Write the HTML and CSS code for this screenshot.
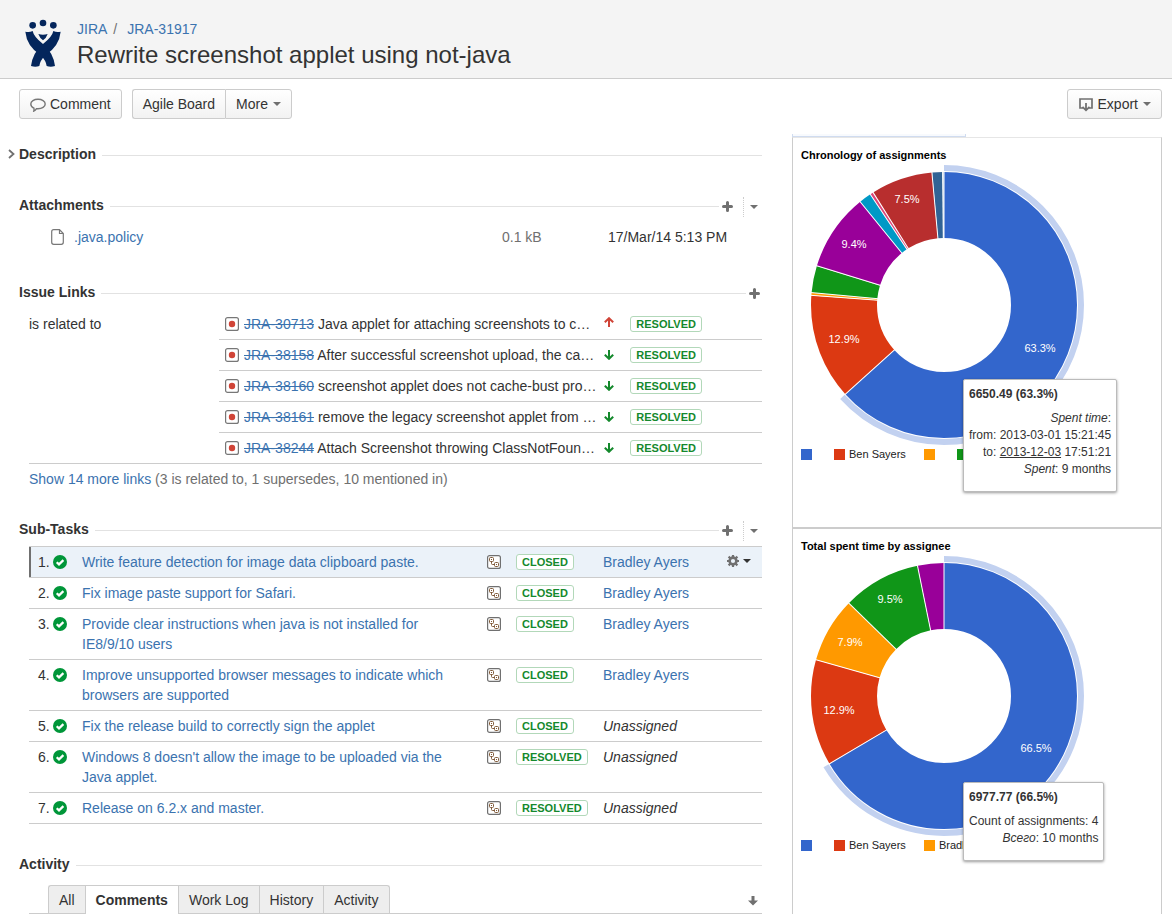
FILE: index.html
```html
<!DOCTYPE html>
<html lang="en">
<head>
<meta charset="utf-8">
<title>JRA-31917 Rewrite screenshot applet using not-java</title>
<link rel="stylesheet" href="styles.css">
</head>
<body>
<svg class="defs" aria-hidden="true">
  <symbol id="plus" viewBox="0 0 11 11"><path d="M5.500 1.500v8M1.500 5.500h8" fill="none" stroke="#707070" stroke-width="3" stroke-linecap="round"/></symbol>
  <symbol id="caret" viewBox="0 0 8 4"><path d="M0 0h8L4 4z" fill="currentColor"/></symbol>
  <symbol id="bug" viewBox="0 0 14 14"><rect x=".6" y=".6" width="12.800" height="12.800" rx="2" fill="#fff" stroke="#777" stroke-width="1.200"/><circle cx="7" cy="7" r="3.200" fill="#d04437"/></symbol>
  <symbol id="up" viewBox="0 0 10 10"><path d="M5 10V1.500M.8 5.300L5 1.200l4.200 4.100" fill="none" stroke="#d04437" stroke-width="2"/></symbol>
  <symbol id="down" viewBox="0 0 10 10"><path d="M5 0v8.500M.8 4.700L5 8.800l4.200-4.100" fill="none" stroke="#14892c" stroke-width="2"/></symbol>
  <symbol id="done" viewBox="0 0 14 14"><circle cx="7" cy="7" r="7" fill="#009639"/><path d="M3.700 7.200l2.300 2.200 4.400-4.300" fill="none" stroke="#fff" stroke-width="2.200"/></symbol>
  <symbol id="subtask" viewBox="0 0 14 14"><rect x=".6" y=".6" width="12.800" height="12.800" rx="2" fill="#fff" stroke="#707070" stroke-width="1.200"/><g fill="none" stroke="#815b3a"><rect x="2.500" y="2.500" width="4" height="4" rx="1"/><rect x="7.500" y="7.500" width="4" height="4" rx="1"/><path d="M4.500 6.500v2q0 1 1 1h2"/></g><path d="M4 4h1v1H4zM9 9h1v1H9z" fill="#815b3a"/></symbol>
</svg>

<header class="page-header">
  <svg class="logo" viewBox="75 57 108 144" role="img" aria-label="JIRA">
    <g fill="#04265c">
      <circle cx="98" cy="76" r="10"/><circle cx="129" cy="69" r="10"/><circle cx="160" cy="76" r="10"/>
      <path d="M115 102Q129 106 143 102Q138 116 129 121Q120 116 115 102Z"/>
      <path d="M76 95Q88 98 98 93Q101 110 129 132Q160 158 165 198Q152 203 140 198Q138 182 122 166Q80 138 76 95Z"/>
      <path d="M182 95Q170 98 160 93Q157 110 129 132Q98 158 93 198Q106 203 118 198Q120 182 136 166Q178 138 182 95Z"/>
    </g>
  </svg>
  <div>
    <nav class="crumbs" aria-label="Breadcrumb"><a href="#">JIRA</a><span class="slash">/</span><a href="#">JRA-31917</a></nav>
    <h1>Rewrite screenshot applet using not-java</h1>
  </div>
</header>

<div class="toolbar">
  <button class="btn" type="button">
    <svg width="16" height="16" viewBox="0 0 16 16"><path d="M8 3.200c4 0 7.200 2 7.200 4.800S12 12.800 8 12.800q-.8 0-1.500-.1Q5.300 14.700 3.800 15.200q.4-1.500.1-3.100C2 11.300.8 9.700.8 8 .8 5.200 4 3.200 8 3.200z" fill="none" stroke="#777" stroke-width="1.400"/></svg>Comment</button>
  <div class="btn-group">
    <button class="btn" type="button">Agile Board</button>
    <button class="btn" type="button">More<svg class="caret" width="8" height="4"><use href="#caret"/></svg></button>
  </div>
  <button class="btn btn-export" type="button">
    <svg width="16" height="16" viewBox="0 0 16 16"><path d="M5 12H2V3h12v9h-3" fill="none" stroke="#707070" stroke-width="1.700"/><path d="M8 7v7M4.500 10.800L8 14.300l3.500-3.500" fill="none" stroke="#707070" stroke-width="1.800"/></svg>Export<svg class="caret" width="8" height="4"><use href="#caret"/></svg></button>
</div>

<div class="content">
  <main class="issue">
    <section class="description">
      <div class="heading"><button class="twisty" type="button" aria-label="Expand description"><svg width="7" height="10" viewBox="0 0 7 10"><path d="M1 1l4.500 4L1 9" fill="none" stroke="#707070" stroke-width="1.800"/></svg></button><h2>Description</h2><span class="rule"></span></div>
    </section>

    <section class="attachments">
      <div class="heading"><h2>Attachments</h2><span class="rule"></span>
        <button class="op" type="button" aria-label="Add attachment"><svg width="11" height="11"><use href="#plus"/></svg></button>
        <button class="op op-menu" type="button" aria-label="Attachment options"><svg width="8" height="4"><use href="#caret"/></svg></button>
      </div>
      <div class="file">
        <svg width="13" height="16" viewBox="0 0 13 16"><path d="M8.500.7H2.700q-2 0-2 2v10.600q0 2 2 2h7.600q2 0 2-2V4.500zM8.500.7v3.800h3.800" fill="none" stroke="#777" stroke-width="1.200"/></svg>
        <a href="#">.java.policy</a><span class="size">0.1 kB</span><span>17/Mar/14 5:13 PM</span>
      </div>
    </section>

    <section class="links">
      <div class="heading"><h2>Issue Links</h2><span class="rule"></span>
        <button class="op" type="button" aria-label="Add link"><svg width="11" height="11"><use href="#plus"/></svg></button>
      </div>
      <dl class="link-list">
        <dt>is related to</dt>
        <dd>
          <div class="link-row"><svg width="14" height="14"><use href="#bug"/></svg><p><a href="#">JRA-30713</a> Java applet for attaching screenshots to c…</p><svg class="priority" width="10" height="10"><use href="#up"/></svg><span class="badge">RESOLVED</span></div>
          <div class="link-row"><svg width="14" height="14"><use href="#bug"/></svg><p><a href="#">JRA-38158</a> After successful screenshot upload, the ca…</p><svg width="10" height="10"><use href="#down"/></svg><span class="badge">RESOLVED</span></div>
          <div class="link-row"><svg width="14" height="14"><use href="#bug"/></svg><p><a href="#">JRA-38160</a> screenshot applet does not cache-bust pro…</p><svg width="10" height="10"><use href="#down"/></svg><span class="badge">RESOLVED</span></div>
          <div class="link-row"><svg width="14" height="14"><use href="#bug"/></svg><p><a href="#">JRA-38161</a> remove the legacy screenshot applet from …</p><svg width="10" height="10"><use href="#down"/></svg><span class="badge">RESOLVED</span></div>
          <div class="link-row"><svg width="14" height="14"><use href="#bug"/></svg><p><a href="#">JRA-38244</a> Attach Screenshot throwing ClassNotFoun…</p><svg width="10" height="10"><use href="#down"/></svg><span class="badge">RESOLVED</span></div>
        </dd>
      </dl>
      <p class="more-links"><a href="#">Show 14 more links</a> (3 is related to, 1 supersedes, 10 mentioned in)</p>
    </section>

    <section class="subtasks">
      <div class="heading"><h2>Sub-Tasks</h2><span class="rule"></span>
        <button class="op" type="button" aria-label="Create sub-task"><svg width="11" height="11"><use href="#plus"/></svg></button>
        <button class="op op-menu" type="button" aria-label="Sub-task options"><svg width="8" height="4"><use href="#caret"/></svg></button>
      </div>
      <table class="tasks">
        <colgroup><col class="c-num"><col><col class="c-type"><col class="c-status"><col class="c-who"><col class="c-ops"></colgroup>
        <tbody>
          <tr class="active"><td class="num">1.<svg width="14" height="14"><use href="#done"/></svg></td><td class="summary"><a href="#">Write feature detection for image data clipboard paste.</a></td><td><svg width="14" height="14"><use href="#subtask"/></svg></td><td><span class="badge">CLOSED</span></td><td><a href="#">Bradley Ayers</a></td><td><button class="gear" type="button" aria-label="Actions"><svg width="12" height="12" viewBox="0 0 12 12"><circle cx="6" cy="6" r="3.400" fill="none" stroke="#707070" stroke-width="2.600"/><path d="M6 0v2.500M6 9.500V12M0 6h2.500M9.500 6H12M1.600 1.600l1.900 1.900M8.500 8.500l1.900 1.900M10.400 1.600L8.500 3.500M3.500 8.500l-1.900 1.900" stroke="#707070" stroke-width="2.200"/></svg><svg width="8" height="4"><use href="#caret"/></svg></button></td></tr>
          <tr><td class="num">2.<svg width="14" height="14"><use href="#done"/></svg></td><td class="summary"><a href="#">Fix image paste support for Safari.</a></td><td><svg width="14" height="14"><use href="#subtask"/></svg></td><td><span class="badge">CLOSED</span></td><td><a href="#">Bradley Ayers</a></td><td></td></tr>
          <tr><td class="num">3.<svg width="14" height="14"><use href="#done"/></svg></td><td class="summary"><a href="#">Provide clear instructions when java is not installed for IE8/9/10 users</a></td><td><svg width="14" height="14"><use href="#subtask"/></svg></td><td><span class="badge">CLOSED</span></td><td><a href="#">Bradley Ayers</a></td><td></td></tr>
          <tr><td class="num">4.<svg width="14" height="14"><use href="#done"/></svg></td><td class="summary"><a href="#">Improve unsupported browser messages to indicate which browsers are supported</a></td><td><svg width="14" height="14"><use href="#subtask"/></svg></td><td><span class="badge">CLOSED</span></td><td><a href="#">Bradley Ayers</a></td><td></td></tr>
          <tr><td class="num">5.<svg width="14" height="14"><use href="#done"/></svg></td><td class="summary"><a href="#">Fix the release build to correctly sign the applet</a></td><td><svg width="14" height="14"><use href="#subtask"/></svg></td><td><span class="badge">CLOSED</span></td><td><em>Unassigned</em></td><td></td></tr>
          <tr><td class="num">6.<svg width="14" height="14"><use href="#done"/></svg></td><td class="summary"><a href="#">Windows 8 doesn't allow the image to be uploaded via the Java applet.</a></td><td><svg width="14" height="14"><use href="#subtask"/></svg></td><td><span class="badge">RESOLVED</span></td><td><em>Unassigned</em></td><td></td></tr>
          <tr><td class="num">7.<svg width="14" height="14"><use href="#done"/></svg></td><td class="summary"><a href="#">Release on 6.2.x and master.</a></td><td><svg width="14" height="14"><use href="#subtask"/></svg></td><td><span class="badge">RESOLVED</span></td><td><em>Unassigned</em></td><td></td></tr>
        </tbody>
      </table>
    </section>

    <section class="activity">
      <div class="heading"><h2>Activity</h2><span class="rule"></span></div>
      <div class="tabs">
        <a href="#">All</a><a href="#" class="current" aria-current="page">Comments</a><a href="#">Work Log</a><a href="#">History</a><a href="#">Activity</a>
        <button class="sort" type="button" aria-label="Sort order"><svg width="10" height="10" viewBox="0 0 10 10"><path d="M3.500 0h3v4.500H10L5 9.500 0 4.500h3.500z" fill="#707070"/></svg></button>
      </div>
    </section>
  </main>

  <aside class="charts">
    <div class="strip"></div>
    <section class="panel panel-first">
      <h2>Chronology of assignments</h2>
      <svg class="donut" width="280" height="280" viewBox="0 0 280 280" role="img" aria-label="Chronology of assignments">
        <g transform="rotate(-90 140 140)">
          <circle class="halo" cx="140" cy="140" r="137" pathLength="100" stroke-dasharray="63.3 100"/>
          <g class="ring">
            <circle cx="140" cy="140" r="100" pathLength="100" stroke="#3366cc" stroke-dasharray="63.3 100"/>
            <circle cx="140" cy="140" r="100" pathLength="100" stroke="#dc3912" stroke-dasharray="12.85 100" stroke-dashoffset="-63.3"/>
            <circle cx="140" cy="140" r="100" pathLength="100" stroke="#ff9900" stroke-dasharray=".35 100" stroke-dashoffset="-76.15"/>
            <circle cx="140" cy="140" r="100" pathLength="100" stroke="#109618" stroke-dasharray="3.25 100" stroke-dashoffset="-76.5"/>
            <circle cx="140" cy="140" r="100" pathLength="100" stroke="#990099" stroke-dasharray="9.4 100" stroke-dashoffset="-79.75"/>
            <circle cx="140" cy="140" r="100" pathLength="100" stroke="#0099c6" stroke-dasharray="1.5 100" stroke-dashoffset="-89.15"/>
            <circle cx="140" cy="140" r="100" pathLength="100" stroke="#dd4477" stroke-dasharray=".4 100" stroke-dashoffset="-90.65"/>
            <circle cx="140" cy="140" r="100" pathLength="100" stroke="#b82e2e" stroke-dasharray="7.5 100" stroke-dashoffset="-91.05"/>
            <circle cx="140" cy="140" r="100" pathLength="100" stroke="#316395" stroke-dasharray="1.3 100" stroke-dashoffset="-98.55"/>
            <circle cx="140" cy="140" r="100" pathLength="100" stroke="#b0c4d8" stroke-dasharray=".15 100" stroke-dashoffset="-99.85"/>
          </g>
        </g>
        <g class="cuts">
          <path d="M140 6v68"/>
          <path d="M140 6v68" transform="rotate(227.88 140 140)"/>
          <path d="M140 6v68" transform="rotate(274.14 140 140)"/>
          <path d="M140 6v68" transform="rotate(275.4 140 140)"/>
          <path d="M140 6v68" transform="rotate(287.1 140 140)"/>
          <path d="M140 6v68" transform="rotate(320.94 140 140)"/>
          <path d="M140 6v68" transform="rotate(326.34 140 140)"/>
          <path d="M140 6v68" transform="rotate(327.78 140 140)"/>
          <path d="M140 6v68" transform="rotate(354.78 140 140)"/>
          <path d="M140 6v68" transform="rotate(359.4 140 140)"/>
        </g>
        <g class="pct"><text x="236" y="187">63.3%</text><text x="40" y="178">12.9%</text><text x="50" y="83">9.4%</text><text x="103" y="38">7.5%</text></g>
      </svg>
      <ul class="legend">
        <li><i class="blue"></i></li><li><i class="red"></i>Ben Sayers</li><li><i class="orange"></i></li><li><i class="green"></i></li>
      </ul>
      <div class="tip tip-chronology">
        <strong>6650.49 (63.3%)</strong>
        <p><em>Spent time</em>:<br>from: 2013-03-01 15:21:45<br>to: <u>2013-12-03</u> 17:51:21<br><em>Spent</em>: 9 months</p>
      </div>
    </section>
    <section class="panel panel-last">
      <h2>Total spent time by assignee</h2>
      <svg class="donut" width="280" height="280" viewBox="0 0 280 280" role="img" aria-label="Total spent time by assignee">
        <g transform="rotate(-90 140 140)">
          <circle class="halo" cx="140" cy="140" r="137" pathLength="100" stroke-dasharray="66.5 100"/>
          <g class="ring">
            <circle cx="140" cy="140" r="100" pathLength="100" stroke="#3366cc" stroke-dasharray="66.5 100"/>
            <circle cx="140" cy="140" r="100" pathLength="100" stroke="#dc3912" stroke-dasharray="12.9 100" stroke-dashoffset="-66.5"/>
            <circle cx="140" cy="140" r="100" pathLength="100" stroke="#ff9900" stroke-dasharray="7.9 100" stroke-dashoffset="-79.4"/>
            <circle cx="140" cy="140" r="100" pathLength="100" stroke="#109618" stroke-dasharray="9.5 100" stroke-dashoffset="-87.3"/>
            <circle cx="140" cy="140" r="100" pathLength="100" stroke="#990099" stroke-dasharray="3.2 100" stroke-dashoffset="-96.8"/>
          </g>
        </g>
        <g class="cuts">
          <path d="M140 6v68"/>
          <path d="M140 6v68" transform="rotate(239.4 140 140)"/>
          <path d="M140 6v68" transform="rotate(285.84 140 140)"/>
          <path d="M140 6v68" transform="rotate(314.28 140 140)"/>
          <path d="M140 6v68" transform="rotate(348.48 140 140)"/>
        </g>
        <g class="pct"><text x="232" y="196">66.5%</text><text x="35" y="158">12.9%</text><text x="46" y="90">7.9%</text><text x="86" y="47">9.5%</text></g>
      </svg>
      <ul class="legend">
        <li><i class="blue"></i></li><li><i class="red"></i>Ben Sayers</li><li><i class="orange"></i>Bradley Ayers</li>
      </ul>
      <div class="tip tip-total">
        <strong>6977.77 (66.5%)</strong>
        <p>Count of assignments: 4<br><em>Всего</em>: 10 months</p>
      </div>
    </section>
  </aside>
</div>
</body>
</html>
```
FILE: styles.css
```css
* { box-sizing: border-box; }

body {
  margin: 0;
  min-height: 100vh;
  display: flex;
  flex-direction: column;
  background: #fff;
  color: #333;
  font: 14px/20px "Liberation Sans", Arial, sans-serif;
}

h1, h2, p, dl, dd, ul { margin: 0; padding: 0; }
a { color: #3b73af; text-decoration: none; }
svg { display: block; flex: none; }
button { font: inherit; color: inherit; cursor: pointer; }
.defs { position: absolute; width: 0; height: 0; }

.page-header {
  display: flex;
  gap: 16px;
  padding: 19px 25px 8px;
  background: #f4f4f4;
  border-bottom: 1px solid #ccc;
}
.logo { width: 36px; height: 48px; }
.page-header h1 { font-size: 24px; line-height: 31px; font-weight: normal; }
.slash { margin: 0 10px 0 6px; color: #707070; }

.toolbar { display: flex; gap: 10px; padding: 10px 10px 15px 19px; }
.btn {
  display: flex;
  align-items: center;
  gap: 4px;
  height: 30px;
  padding: 0 10px;
  border: 1px solid #ccc;
  border-radius: 3px;
  background: linear-gradient(#fff, #f2f2f2);
}
.btn-group { display: flex; }
.btn-group .btn:first-child { border-radius: 3px 0 0 3px; border-right: 0; }
.btn-group .btn:last-child { border-radius: 0 3px 3px 0; }
.btn-export { margin-left: auto; }
.caret { color: #707070; margin-left: 1px; }

.content {
  flex: 1;
  display: grid;
  grid-template-columns: minmax(0, 1fr) 370px;
  gap: 30px;
  padding: 0 10px 0 19px;
}
.issue { padding-top: 10px; }

.heading { display: flex; align-items: center; height: 20px; }
.heading h2 { font-size: 14px; line-height: 20px; }
.rule { flex: 1; height: 1px; margin: 3px 0 0 6px; background: #e2e2e2; }
.twisty { border: 0; padding: 0; background: none; width: 11px; margin-left: -11px; }
.op {
  display: flex;
  align-items: center;
  height: 20px;
  margin-top: 3px;
  padding: 0 2px 0 3px;
  border: 0;
  background: none;
  color: #707070;
}
.op-menu { margin-left: 8px; padding: 0 4px 0 6px; border-left: 1px dotted #ccc; }

.attachments { margin-top: 31px; }
.file {
  display: grid;
  grid-template-columns: 23px 1fr 106px 154px;
  align-items: center;
  margin-top: 12px;
  padding-left: 32px;
}
.size { color: #707070; }

.links { margin-top: 35px; }
.link-list {
  display: grid;
  grid-template-columns: 190px 1fr;
  margin: 7px 0 0 10px;
  border-bottom: 1px solid #ccc;
}
.link-list dt { padding-top: 5px; }
.link-row {
  display: grid;
  grid-template-columns: 14px minmax(0, 1fr) 10px 88px;
  align-items: center;
  padding: 5px 60px 5px 6px;
  border-bottom: 1px solid #ccc;
}
.link-row:last-child { border-bottom: 0; }
.link-row p { padding-left: 5px; white-space: nowrap; }
.link-row a { text-decoration: line-through; }
.link-row .badge { justify-self: end; }
.priority { margin-bottom: 4px; }
.more-links { margin: 5px 0 0 10px; color: #707070; }

.badge {
  display: inline-block;
  height: 16px;
  padding: 0 5px;
  border: 1px solid #b2d8b9;
  border-radius: 3px;
  background: #fff;
  color: #14892c;
  font-size: 11px;
  font-weight: bold;
  line-height: 14px;
}

.subtasks { margin-top: 30px; }
.tasks {
  width: calc(100% - 10px);
  margin: 7px 0 0 10px;
  border-top: 1px solid #ccc;
  border-spacing: 0;
  table-layout: fixed;
}
.tasks td { padding: 5px 0; border-bottom: 1px solid #ccc; vertical-align: top; }
.tasks td > svg { margin-top: 3px; }
.tasks .badge { display: block; width: max-content; margin-top: 2px; }
.tasks .num { padding-left: 9px; }
.num svg { display: inline-block; margin-left: 3px; vertical-align: -2px; }
.tasks .summary { padding-right: 20px; }
.c-num { width: 53px; }
.c-type { width: 29px; }
.c-status { width: 87px; }
.c-who { width: 124px; }
.c-ops { width: 35px; }
.active td { background: #ebf2f9; }
.active .num { box-shadow: inset 2px 0 #707070; }
.gear { display: flex; align-items: center; gap: 4px; height: 18px; padding: 0; border: 0; background: none; }

.activity { margin-top: 30px; }
.tabs {
  display: flex;
  align-items: flex-end;
  margin: 11px 0 0 10px;
  padding-left: 19px;
  height: 29px;
  border-bottom: 1px solid #ccc;
}
.tabs a {
  height: 28px;
  padding: 4px 10px;
  border: 1px solid #ccc;
  border-width: 1px 0 0 1px;
  background: #eee;
  color: #333;
}
.tabs a:first-child { border-top-left-radius: 3px; }
.tabs a:last-of-type { border-right-width: 1px; border-top-right-radius: 3px; }
.tabs .current { height: 29px; margin-bottom: -1px; background: #fff; font-weight: bold; }
.sort { margin: 0 0 7px auto; padding: 0 4px; border: 0; background: none; }

.charts { display: flex; flex-direction: column; }
.strip { width: 174px; height: 3px; border: 1px solid #d0dcf0; border-top: 0; background: #f8fafd; }
.panel {
  position: relative;
  min-height: 391px;
  padding: 10px 8px 0;
  border: 1px solid #ccc;
}
.panel-first { border-top-color: #e6e6e6; }
.panel-last { flex: 1; min-height: 0; border-bottom: 0; }
.panel h2 { color: #000; font-size: 11px; line-height: 14px; }
.donut { margin: 3px 0 0 3px; }
.donut circle { fill: none; }
.halo { stroke: #c2d1f0; stroke-width: 6px; }
.ring { stroke-width: 66px; }
.cuts { stroke: #fff; stroke-width: 1px; }
.pct { fill: #fff; font-size: 11px; text-anchor: middle; }
.legend {
  display: flex;
  gap: 18px;
  margin-top: 3px;
  list-style: none;
  color: #222;
  font-size: 11px;
  line-height: 13px;
  white-space: nowrap;
}
.legend li { display: flex; align-items: center; }
.legend i { width: 11px; height: 11px; margin-right: 4px; }
.blue { background: #3366cc; }
.red { background: #dc3912; }
.orange { background: #ff9900; }
.green { background: #109618; }

.tip {
  position: absolute;
  left: 170px;
  padding: 6px 5px 13px;
  border: 1px solid #bbb;
  border-radius: 2px;
  background: #fff;
  box-shadow: 0 1px 3px rgba(0, 0, 0, 0.4);
  font-size: 12px;
  line-height: 17px;
  white-space: nowrap;
}
.tip strong { display: block; margin-bottom: 7px; }
.tip p { text-align: right; }
.tip-chronology { top: 241px; }
.tip-total { top: 253px; }
```
